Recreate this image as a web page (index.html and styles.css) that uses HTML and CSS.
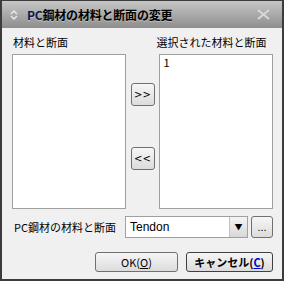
FILE: index.html
```html
<!DOCTYPE html>
<html lang="ja">
<head>
    <meta charset="UTF-8">
    <title>PC鋼材の材料と断面の変更</title>
    <link rel="stylesheet" href="styles.css">
</head>
<body>
    <div class="window">
        <div class="titlebar">
            <svg class="title-icon" width="10" height="12" viewBox="0 0 10 12">
                <path d="M2 5 L5 2 L8 5" fill="none" stroke="#e8e8e8" stroke-width="1.5"/>
                <path d="M2 7 L5 10 L8 7" fill="none" stroke="#e8e8e8" stroke-width="1.5"/>
            </svg>
            <span class="title-text"><span class="pc">PC</span>鋼材の材料と断面の変更</span>
            <svg class="close-icon" width="13" height="11" viewBox="0 0 13 11">
                <path d="M1 1 L12 10 M12 1 L1 10" stroke="#d8d8d8" stroke-width="2"/>
            </svg>
        </div>

        <div class="content">
            <div class="lists">
                <div class="list-col">
                    <div class="label">材料と断面</div>
                    <div class="listbox"></div>
                </div>
                <div class="move-col">
                    <button class="btn btn-move">&gt;&gt;</button>
                    <button class="btn btn-move">&lt;&lt;</button>
                </div>
                <div class="list-col">
                    <div class="label">選択された材料と断面</div>
                    <div class="listbox">
                        <div class="list-item">1</div>
                    </div>
                </div>
            </div>

            <div class="combo-row">
                <div class="label">PC鋼材の材料と断面</div>
                <div class="combo">
                    <span class="combo-value">Tendon</span>
                    <span class="combo-arrow">▼</span>
                </div>
                <button class="btn btn-more">...</button>
            </div>

            <div class="actions">
                <button class="btn btn-ok">OK(<u>O</u>)</button>
                <button class="btn btn-cancel">キャンセル(<u class="key">C</u>)</button>
            </div>
        </div>
    </div>
</body>
</html>
```

FILE: styles.css
```css
* {
    margin: 0;
    padding: 0;
    box-sizing: border-box;
}

body {
    font-family: "Noto Sans CJK JP", "Liberation Sans", sans-serif;
    font-size: 11px;
    color: #000;
    background: #f0f0f0;
}

.window {
    width: 284px;
    height: 281px;
    border: 2px solid #3c3c3c;
    border-top: 1px solid #3c3c3c;
    background: #f0f0f0;
    display: flex;
    flex-direction: column;
}

.titlebar {
    height: 27px;
    background: linear-gradient(#c6c6c6, #8e8e8e);
    display: flex;
    align-items: center;
    padding: 0 12px 0 7px;
    flex-shrink: 0;
}

.title-icon {
    margin-right: 8px;
}

.title-text {
    flex: 1;
    font-size: 12px;
    font-weight: bold;
    color: #000;
    text-shadow: 0 1px 0 rgba(255, 255, 255, 0.35);
    letter-spacing: -0.2px;
}

.title-text .pc {
    color: #0b1a4a;
}

.content {
    flex: 1;
    padding: 5px 9px 0 10px;
    display: flex;
    flex-direction: column;
}

.lists {
    display: flex;
    height: 176px;
}

.list-col {
    display: flex;
    flex-direction: column;
    width: 114px;
}

.list-col .label {
    height: 21px;
    padding-left: 1px;
    line-height: 14px;
    padding-top: 2px;
}

.list-col:last-child .label {
    margin-left: -4px;
}

.listbox {
    flex: 1;
    background: #fff;
    border: 1px solid #a0a0a0;
}

.list-item {
    padding: 1px 3px;
    line-height: 13px;
}

.move-col {
    width: 34px;
    display: flex;
    flex-direction: column;
    align-items: center;
    padding-top: 50px;
    gap: 41px;
}

.btn {
    font-family: inherit;
    font-size: 11px;
    background: linear-gradient(#f6f6f6, #dcdcdc);
    border: 1px solid #707070;
    border-radius: 3px;
    color: #000;
}

.btn-move {
    width: 24px;
    height: 23px;
    font-family: "DejaVu Sans", sans-serif;
    font-size: 10px;
}

.combo-row {
    display: flex;
    align-items: center;
    margin-top: 7px;
    height: 22px;
}

.combo-row .label {
    width: 113px;
    padding-left: 2px;
}

.combo {
    width: 123px;
    height: 22px;
    background: #fff;
    border: 1px solid #a0a0a0;
    display: flex;
    align-items: center;
}

.combo-value {
    flex: 1;
    padding-left: 4px;
    font-family: "Liberation Sans", sans-serif;
    font-size: 12px;
}

.combo-arrow {
    width: 18px;
    height: 20px;
    background: linear-gradient(#f4f4f4, #d8d8d8);
    border-left: 1px solid #c0c0c0;
    font-size: 8px;
    text-align: center;
    line-height: 20px;
}

.btn-more {
    width: 22px;
    height: 22px;
    margin-left: 3px;
    font-family: "Liberation Sans", sans-serif;
    line-height: 12px;
}

.actions {
    display: flex;
    justify-content: flex-end;
    gap: 8px;
    margin-top: 14px;
}

.btn-ok {
    width: 83px;
    height: 20px;
}

.btn-cancel {
    width: 87px;
    height: 20px;
    font-weight: bold;
    border-color: #404040;
}

.btn-cancel .key {
    color: #0000c8;
}
```
